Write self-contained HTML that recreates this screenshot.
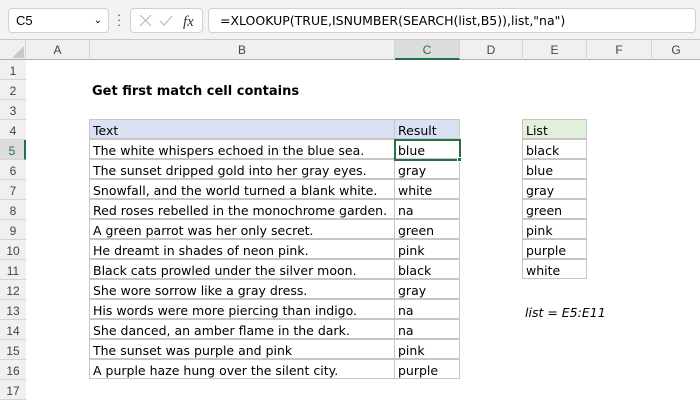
<!DOCTYPE html><html><head><style>
body{margin:0;width:700px;height:400px;overflow:hidden;background:#fff;font-family:"Liberation Sans",sans-serif;position:relative}
.a{position:absolute;box-sizing:border-box}
.t{font-family:"DejaVu Sans","Liberation Sans",sans-serif;font-size:12.5px;color:#000;white-space:nowrap}
.ch{position:absolute;top:40px;height:20px;line-height:20px;text-align:center;font-size:12px;color:#444;border-right:1px solid #d4d4d4;box-sizing:border-box}
.rh{position:absolute;left:0;width:26px;height:20px;line-height:22px;text-align:center;font-size:12px;color:#444;border-bottom:1px solid #d4d4d4;box-sizing:border-box;background:#f0f0f0}
.c{position:absolute;height:20px;line-height:21px;padding-left:3px;box-sizing:border-box;border:1px solid #c6c6c6;margin:-1px 0 0 -1px;font-family:"DejaVu Sans",sans-serif;font-size:12.5px;white-space:nowrap;overflow:hidden}
</style></head><body>
<div class="a" style="left:0;top:0;width:700px;height:40px;background:#f3f3f3;border-bottom:1px solid #c8c8c8"></div>
<div class="a" style="left:8px;top:8px;width:101px;height:25px;background:#fff;border:1px solid #d0d0d0;border-radius:4px;font-size:13px;line-height:23px;padding-left:7px">C5<span style="position:absolute;right:6px;top:0;font-size:10px">&#8964;</span></div>
<div class="a" style="left:117px;top:12px;width:3px;height:16px;font-size:13px;line-height:5px;color:#555">·<br>·<br>·</div>
<div class="a" style="left:130px;top:8px;width:73px;height:25px;background:#fff;border:1px solid #d0d0d0;border-radius:4px"></div>
<svg class="a" style="left:138px;top:13px" width="60" height="16"><path d="M2 2l11 11M13 2L2 13" stroke="#bbb" stroke-width="1.2" fill="none"/><path d="M22 8l4 4 8-9" stroke="#bbb" stroke-width="1.2" fill="none"/><text x="45" y="13" font-family="Liberation Serif" font-style="italic" font-size="15" fill="#333">fx</text></svg>
<div class="a" style="left:208px;top:8px;width:488px;height:25px;background:#fff;border:1px solid #d0d0d0;border-radius:4px;font-family:'DejaVu Sans',sans-serif;font-size:12.5px;line-height:23px;padding-left:11px">=XLOOKUP(TRUE,ISNUMBER(SEARCH(list,B5)),list,"na")</div>
<div class="a" style="left:0;top:40px;width:700px;height:20px;background:#f0f0f0;border-bottom:1px solid #b0b0b0"></div>
<div class="a" style="left:0;top:40px;width:26px;height:20px;border-right:1px solid #d4d4d4"></div>
<svg class="a" style="left:12px;top:46px" width="12" height="12"><path d="M12 0V12H0Z" fill="#c8c8c8"/></svg>
<div class="ch" style="left:26px;width:64px">A</div>
<div class="ch" style="left:90px;width:305px">B</div>
<div class="ch" style="left:395px;width:65px;background:#dcdcdc;border-bottom:2px solid #217346;color:#217346">C</div>
<div class="ch" style="left:460px;width:63px">D</div>
<div class="ch" style="left:523px;width:64px">E</div>
<div class="ch" style="left:587px;width:65px">F</div>
<div class="ch" style="left:652px;width:48px;border:0">G</div>
<div class="a" style="left:25px;top:60px;width:1px;height:340px;background:#c8c8c8"></div>
<div class="rh" style="top:60px">1</div><div class="rh" style="top:80px">2</div><div class="rh" style="top:100px">3</div><div class="rh" style="top:120px">4</div>
<div class="rh" style="top:140px;background:#dcdcdc;color:#217346;border-right:2px solid #217346">5</div>
<div class="rh" style="top:160px">6</div><div class="rh" style="top:180px">7</div><div class="rh" style="top:200px">8</div><div class="rh" style="top:220px">9</div><div class="rh" style="top:240px">10</div><div class="rh" style="top:260px">11</div><div class="rh" style="top:280px">12</div><div class="rh" style="top:300px">13</div><div class="rh" style="top:320px">14</div><div class="rh" style="top:340px">15</div><div class="rh" style="top:360px">16</div><div class="rh" style="top:380px">17</div>
<div class="a t" style="left:92px;top:84px;font-weight:bold;font-size:13px">Get first match cell contains</div>
<div class="c" style="left:90px;top:120px;width:306px;background:#d9e1f2">Text</div>
<div class="c" style="left:395px;top:120px;width:66px;background:#d9e1f2">Result</div>
<div class="c" style="left:90px;top:140px;width:306px">The white whispers echoed in the blue sea.</div><div class="c" style="left:395px;top:140px;width:66px">blue</div>
<div class="c" style="left:90px;top:160px;width:306px">The sunset dripped gold into her gray eyes.</div><div class="c" style="left:395px;top:160px;width:66px">gray</div>
<div class="c" style="left:90px;top:180px;width:306px">Snowfall, and the world turned a blank white.</div><div class="c" style="left:395px;top:180px;width:66px">white</div>
<div class="c" style="left:90px;top:200px;width:306px">Red roses rebelled in the monochrome garden.</div><div class="c" style="left:395px;top:200px;width:66px">na</div>
<div class="c" style="left:90px;top:220px;width:306px">A green parrot was her only secret.</div><div class="c" style="left:395px;top:220px;width:66px">green</div>
<div class="c" style="left:90px;top:240px;width:306px">He dreamt in shades of neon pink.</div><div class="c" style="left:395px;top:240px;width:66px">pink</div>
<div class="c" style="left:90px;top:260px;width:306px">Black cats prowled under the silver moon.</div><div class="c" style="left:395px;top:260px;width:66px">black</div>
<div class="c" style="left:90px;top:280px;width:306px">She wore sorrow like a gray dress.</div><div class="c" style="left:395px;top:280px;width:66px">gray</div>
<div class="c" style="left:90px;top:300px;width:306px">His words were more piercing than indigo.</div><div class="c" style="left:395px;top:300px;width:66px">na</div>
<div class="c" style="left:90px;top:320px;width:306px">She danced, an amber flame in the dark.</div><div class="c" style="left:395px;top:320px;width:66px">na</div>
<div class="c" style="left:90px;top:340px;width:306px">The sunset was purple and pink</div><div class="c" style="left:395px;top:340px;width:66px">pink</div>
<div class="c" style="left:90px;top:360px;width:306px">A purple haze hung over the silent city.</div><div class="c" style="left:395px;top:360px;width:66px">purple</div>
<div class="a" style="left:394px;top:139px;width:67px;height:22px;border:2px solid #217346"></div>
<div class="a" style="left:457px;top:157px;width:5px;height:5px;background:#217346;border:1px solid #fff"></div>
<div class="c" style="left:523px;top:120px;width:65px;background:#e2efda">List</div>
<div class="c" style="left:523px;top:140px;width:65px">black</div>
<div class="c" style="left:523px;top:160px;width:65px">blue</div>
<div class="c" style="left:523px;top:180px;width:65px">gray</div>
<div class="c" style="left:523px;top:200px;width:65px">green</div>
<div class="c" style="left:523px;top:220px;width:65px">pink</div>
<div class="c" style="left:523px;top:240px;width:65px">purple</div>
<div class="c" style="left:523px;top:260px;width:65px">white</div>
<div class="a t" style="left:525px;top:305px;font-style:italic">list = E5:E11</div>
</body></html>
